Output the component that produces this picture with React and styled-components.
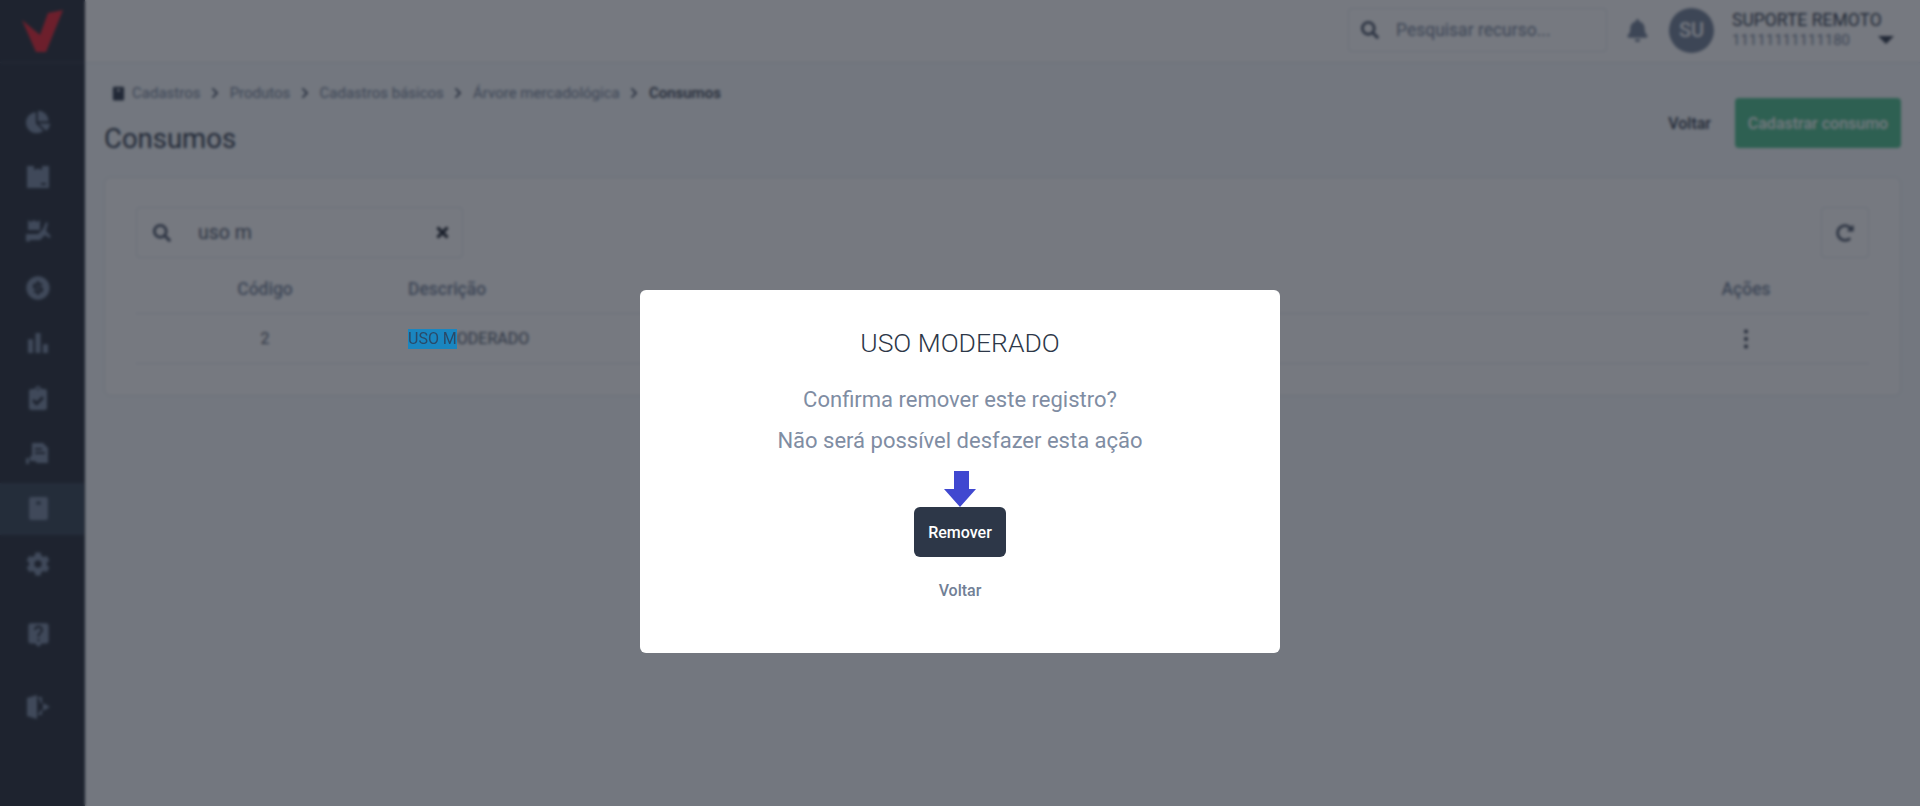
import React from "react";
import styled, { createGlobalStyle } from "styled-components";
import { FaChartPie, FaClipboardCheck, FaBell, FaSearch, FaTimes, FaCog, FaRedoAlt, FaChevronRight } from "react-icons/fa";
import { RiMoneyDollarCircleFill } from "react-icons/ri";
import { MdBarChart, MdLiveHelp } from "react-icons/md";

const Global = createGlobalStyle`
  html, body { margin: 0; padding: 0; height: 100%; overflow: hidden; }
  body { font-family: Roboto, "Liberation Sans", sans-serif; background: #f7fafc; color: #2d3748; }
  * { box-sizing: border-box; }
`;

const Page = styled.div`
  display: flex;
  height: 806px;
  background: #f7fafc;
`;

const Sidebar = styled.aside`
  width: 85px;
  flex-shrink: 0;
  background: #242a36;
  display: flex;
  flex-direction: column;
`;

const LogoBox = styled.div`
  height: 63px;
  border-bottom: 1px solid #343b49;
  padding: 8px 0 0 20px;
  margin-bottom: 33px;
  svg { display: block; }
`;

const NavItem = styled.div`
  height: 52px;
  width: 84px;
  flex-shrink: 0;
  margin-bottom: ${(p) => p.$gap ?? 3.25}px;
  padding-right: 8px;
  display: flex;
  align-items: center;
  justify-content: center;
  color: #7888a1;
  font-size: 24px;
  background: ${(p) => (p.$active ? "#344252" : "transparent")};
  svg { display: block; }
`;

const Main = styled.div`
  flex: 1;
  min-width: 0;
  display: flex;
  flex-direction: column;
`;

const Topbar = styled.header`
  height: 63px;
  background: #fff;
  border-bottom: 1px solid #e2e8f0;
  display: flex;
  align-items: center;
  padding: 0 20px 2px 0;
  justify-content: flex-end;
`;

const TopSearch = styled.div`
  width: 259px;
  height: 44px;
  border: 1px solid #e2e8f0;
  border-radius: 4px;
  display: flex;
  align-items: center;
  padding-left: 12px;
  gap: 17px;
  color: #4a5568;
  font-size: 18px;
  margin-right: 19px;
`;

const TopInput = styled.input`
  border: 0;
  outline: 0;
  background: transparent;
  font: 400 17.5px Roboto, sans-serif;
  width: 200px;
  padding: 0;
  color: #2d3748;
  &::placeholder { color: #718096; opacity: 1; }
`;

const BellWrap = styled.div`
  color: #718096;
  font-size: 23px;
  display: flex;
  margin-right: 20px;
`;

const Avatar = styled.div`
  width: 45px;
  height: 45px;
  border-radius: 50%;
  background: #718096;
  color: #fff;
  font-size: 20px;
  font-weight: 500;
  display: flex;
  align-items: center;
  justify-content: center;
  margin-right: 18px;
`;

const UserBox = styled.div`
  width: 168px;
  display: flex;
  flex-direction: column;
`;

const UserName = styled.div`
  font-size: 17.5px;
  line-height: 20px;
  color: #2d3748;
  white-space: nowrap;
`;

const UserDoc = styled.div`
  font-size: 15px;
  line-height: 20px;
  color: #718096;
  display: flex;
  justify-content: space-between;
  align-items: center;
  padding-right: 6px;
`;

const Caret = styled.svg`
  display: block;
  color: #2d3748;
`;

const Content = styled.main`
  padding: 0 19px 0 19px;
  display: flex;
  flex-direction: column;
`;

const HeadRow = styled.div`
  display: flex;
  justify-content: space-between;
  height: 114px;
`;

const HeadLeft = styled.div`
  display: flex;
  flex-direction: column;
`;

const Crumbs = styled.nav`
  display: flex;
  align-items: center;
  height: 20px;
  margin: 20px 0 0 7px;
  font-size: 15px;
  color: #718096;
  svg { display: block; }
`;

const CrumbIcon = styled.span`
  margin-right: 6px;
  color: #2d3748;
`;

const Chevron = styled.span`
  font-size: 12px;
  margin: 0 8.6px;
  color: #4a5568;
`;

const CrumbLast = styled.span`
  font-weight: 500;
  color: #2d3748;
`;

const Title = styled.h1`
  margin: 18px 0 0;
  font-size: 27.5px;
  line-height: 36px;
  font-weight: 400;
  color: #2d3748;
`;

const HeadActions = styled.div`
  display: flex;
  align-items: center;
  height: 50px;
  margin-top: 35px;
  gap: 24px;
`;

const LinkButton = styled.button`
  border: 0;
  background: transparent;
  padding: 0;
  font: 500 16px Roboto, sans-serif;
  color: ${(p) => p.$color || "#2d3748"};
`;

const GreenButton = styled.button`
  width: 166px;
  height: 50px;
  border: 0;
  border-radius: 4px;
  background: #4cc08c;
  color: #fff;
  font: 500 16px Roboto, sans-serif;
`;

const Card = styled.section`
  height: 219px;
  background: #fff;
  border: 1px solid #e2e8f0;
  border-radius: 6px;
  padding: 29px 31px;
`;

const CardTop = styled.div`
  display: flex;
  justify-content: space-between;
`;

const TableSearch = styled.div`
  width: 327px;
  height: 51px;
  border: 1px solid #e2e8f0;
  border-radius: 4px;
  display: flex;
  align-items: center;
  padding: 0 11px 0 16px;
  color: #4a5568;
  font-size: 18px;
`;

const TableInput = styled.input`
  flex: 1;
  margin-left: 27px;
  border: 0;
  outline: 0;
  background: transparent;
  font: 400 19.5px Roboto, sans-serif;
  color: #4a5568;
  padding: 0;
  min-width: 0;
`;

const Clear = styled.span`
  display: flex;
  color: #1a202c;
  font-size: 17px;
`;

const Refresh = styled.button`
  width: 48px;
  height: 51px;
  border: 1px solid #e2e8f0;
  border-radius: 4px;
  background: transparent;
  display: flex;
  align-items: center;
  justify-content: center;
  color: #4a5568;
  font-size: 18px;
`;

const Row = styled.div`
  display: grid;
  grid-template-columns: 272px 1fr 246px;
  align-items: center;
  height: ${(p) => p.$h}px;
  padding-top: ${(p) => p.$top || 0}px;
  border-bottom: 1px solid #e2e8f0;
  font-size: ${(p) => p.$size || 16}px;
  color: ${(p) => p.$color};
  font-weight: ${(p) => p.$weight || 400};
`;

const Cell = styled.div`
  text-align: ${(p) => p.$align || "left"};
`;

const CenterCell = styled.div`
  text-align: center;
  width: 258px;
`;

const Selected = styled.span`
  position: relative;
  z-index: 60;
  display: inline-block;
  background: #1a86c0;
  color: #2a4a68;
  filter: blur(0.7px);
  line-height: 20px;
`;

const DotsWrap = styled.div`
  display: flex;
  justify-content: center;
  color: #2d3748;
  svg { display: block; }
`;

const Overlay = styled.div`
  position: fixed;
  inset: 0;
  z-index: 50;
  background: rgba(26, 32, 44, 0.6);
  backdrop-filter: blur(1.5px);
  display: flex;
  justify-content: center;
  align-items: flex-start;
  padding-top: 290px;
`;

const Modal = styled.div`
  position: relative;
  z-index: 70;
  width: 640px;
  height: 363px;
  background: #fff;
  border-radius: 6px;
  display: flex;
  flex-direction: column;
  align-items: center;
  padding-top: 38px;
`;

const ModalTitle = styled.h2`
  margin: 0 0 28px;
  font-size: 26.5px;
  line-height: 30px;
  font-weight: 300;
  color: #2d3748;
`;

const ModalText = styled.p`
  margin: 0 0 13px;
  font-size: 22px;
  line-height: 28px;
  color: #7f8da3;
  font-weight: 400;
`;

const Arrow = styled.svg`
  display: block;
  margin-top: 3px;
`;

const RemoveButton = styled.button`
  width: 92px;
  height: 50px;
  border: 0;
  border-radius: 6px;
  background: #2d3748;
  color: #fff;
  font: 500 16px Roboto, sans-serif;
  margin-bottom: 24px;
`;

const BoxIcon = () => (
  <svg width="24" height="24" viewBox="0 0 24 24" fill="currentColor">
    <path fillRule="evenodd" d="M1 1h7v4l4-1.5L16 5V1h7v22H1zM15 18v2h5v-2z" />
  </svg>
);

const DollyIcon = () => (
  <svg width="26" height="28" viewBox="0 0 26 28" fill="currentColor">
    <path d="M3 1l3 2 3-2 3 2 3-2v10H3zM1 15h12l5-5 3-7 2 1-2 8 3 3 2 3-2 1-4-3-5 5H5l-1 2-3-1z" />
  </svg>
);

const HandFileIcon = () => (
  <svg width="26" height="26" viewBox="0 0 26 26" fill="currentColor">
    <path fillRule="evenodd" d="M7 2h11l5 5v15H12l-2-2H5v-5h2zM10 7v2h7V7zM10 11v2h10v-2z" />
    <path d="M1 17h3v6H1z" />
  </svg>
);

const BookIcon = ({ size }) => (
  <svg width={size} height={size} viewBox="0 0 24 24" fill="currentColor">
    <path fillRule="evenodd" d="M3 3a2 2 0 012-2h14a2 2 0 012 2v18a2 2 0 01-2 2H5a2 2 0 01-2-2zM10 5v4l2-1 2 1V5z" />
  </svg>
);

const ExitIcon = () => (
  <svg width="26" height="26" viewBox="0 0 26 26" fill="currentColor">
    <path d="M2 4l10-3v24L2 22zM13 3h4v6h-2V5h-2zM13 19h2v-3h2v5h-4z" />
    <path d="M18 9l7 4-7 4z" />
  </svg>
);

const App = () => (
  <>
    <Global />
    <Page>
      <Sidebar>
        <LogoBox>
          <svg width="46" height="46" viewBox="0 0 46 46">
            <path d="M2 12L20 27 28 5 43 2 26 44H16z" fill="#e8202f" />
          </svg>
        </LogoBox>
        <NavItem><FaChartPie /></NavItem>
        <NavItem><BoxIcon /></NavItem>
        <NavItem><DollyIcon /></NavItem>
        <NavItem><RiMoneyDollarCircleFill size={28} /></NavItem>
        <NavItem><MdBarChart size={30} /></NavItem>
        <NavItem><FaClipboardCheck /></NavItem>
        <NavItem><HandFileIcon /></NavItem>
        <NavItem $active><BookIcon size={25} /></NavItem>
        <NavItem $gap={18}><FaCog /></NavItem>
        <NavItem $gap={21}><MdLiveHelp size={27} /></NavItem>
        <NavItem><ExitIcon /></NavItem>
      </Sidebar>
      <Main>
        <Topbar>
          <TopSearch>
            <FaSearch />
            <TopInput readOnly placeholder="Pesquisar recurso..." />
          </TopSearch>
          <BellWrap><FaBell /></BellWrap>
          <Avatar>SU</Avatar>
          <UserBox>
            <UserName>SUPORTE REMOTO</UserName>
            <UserDoc>
              11111111111180
              <Caret width="16" height="8" viewBox="0 0 16 8">
                <path d="M0 0h16L8 8z" fill="currentColor" />
              </Caret>
            </UserDoc>
          </UserBox>
        </Topbar>
        <Content>
          <HeadRow>
            <HeadLeft>
              <Crumbs>
                <CrumbIcon><BookIcon size={15} /></CrumbIcon>
                Cadastros<Chevron><FaChevronRight /></Chevron>
                Produtos<Chevron><FaChevronRight /></Chevron>
                Cadastros básicos<Chevron><FaChevronRight /></Chevron>
                Árvore mercadológica<Chevron><FaChevronRight /></Chevron>
                <CrumbLast>Consumos</CrumbLast>
              </Crumbs>
              <Title>Consumos</Title>
            </HeadLeft>
            <HeadActions>
              <LinkButton>Voltar</LinkButton>
              <GreenButton>Cadastrar consumo</GreenButton>
            </HeadActions>
          </HeadRow>
          <Card>
            <CardTop>
              <TableSearch>
                <FaSearch />
                <TableInput readOnly value="uso m" />
                <Clear><FaTimes /></Clear>
              </TableSearch>
              <Refresh><FaRedoAlt /></Refresh>
            </CardTop>
            <Row $h={56} $top={6} $size={17.5} $color="#718096" $weight={500}>
              <CenterCell>Código</CenterCell>
              <Cell>Descrição</Cell>
              <Cell $align="center">Ações</Cell>
            </Row>
            <Row $h={50} $color="#4a5568">
              <CenterCell>2</CenterCell>
              <Cell><Selected>USO M</Selected>ODERADO</Cell>
              <DotsWrap>
                <svg width="6" height="20" viewBox="0 0 6 20" fill="currentColor">
                  <circle cx="3" cy="2.5" r="2" />
                  <circle cx="3" cy="10" r="2" />
                  <circle cx="3" cy="17.5" r="2" />
                </svg>
              </DotsWrap>
            </Row>
          </Card>
        </Content>
      </Main>
    </Page>
    <Overlay>
      <Modal>
        <ModalTitle>USO MODERADO</ModalTitle>
        <ModalText>Confirma remover este registro?</ModalText>
        <ModalText>Não será possível desfazer esta ação</ModalText>
        <Arrow width="32" height="36" viewBox="0 0 32 36">
          <path d="M10 0h15v18h7L16 36 0 18h10z" fill="#4048d0" />
        </Arrow>
        <RemoveButton>Remover</RemoveButton>
        <LinkButton $color="#718096">Voltar</LinkButton>
      </Modal>
    </Overlay>
  </>
);

export default App;
